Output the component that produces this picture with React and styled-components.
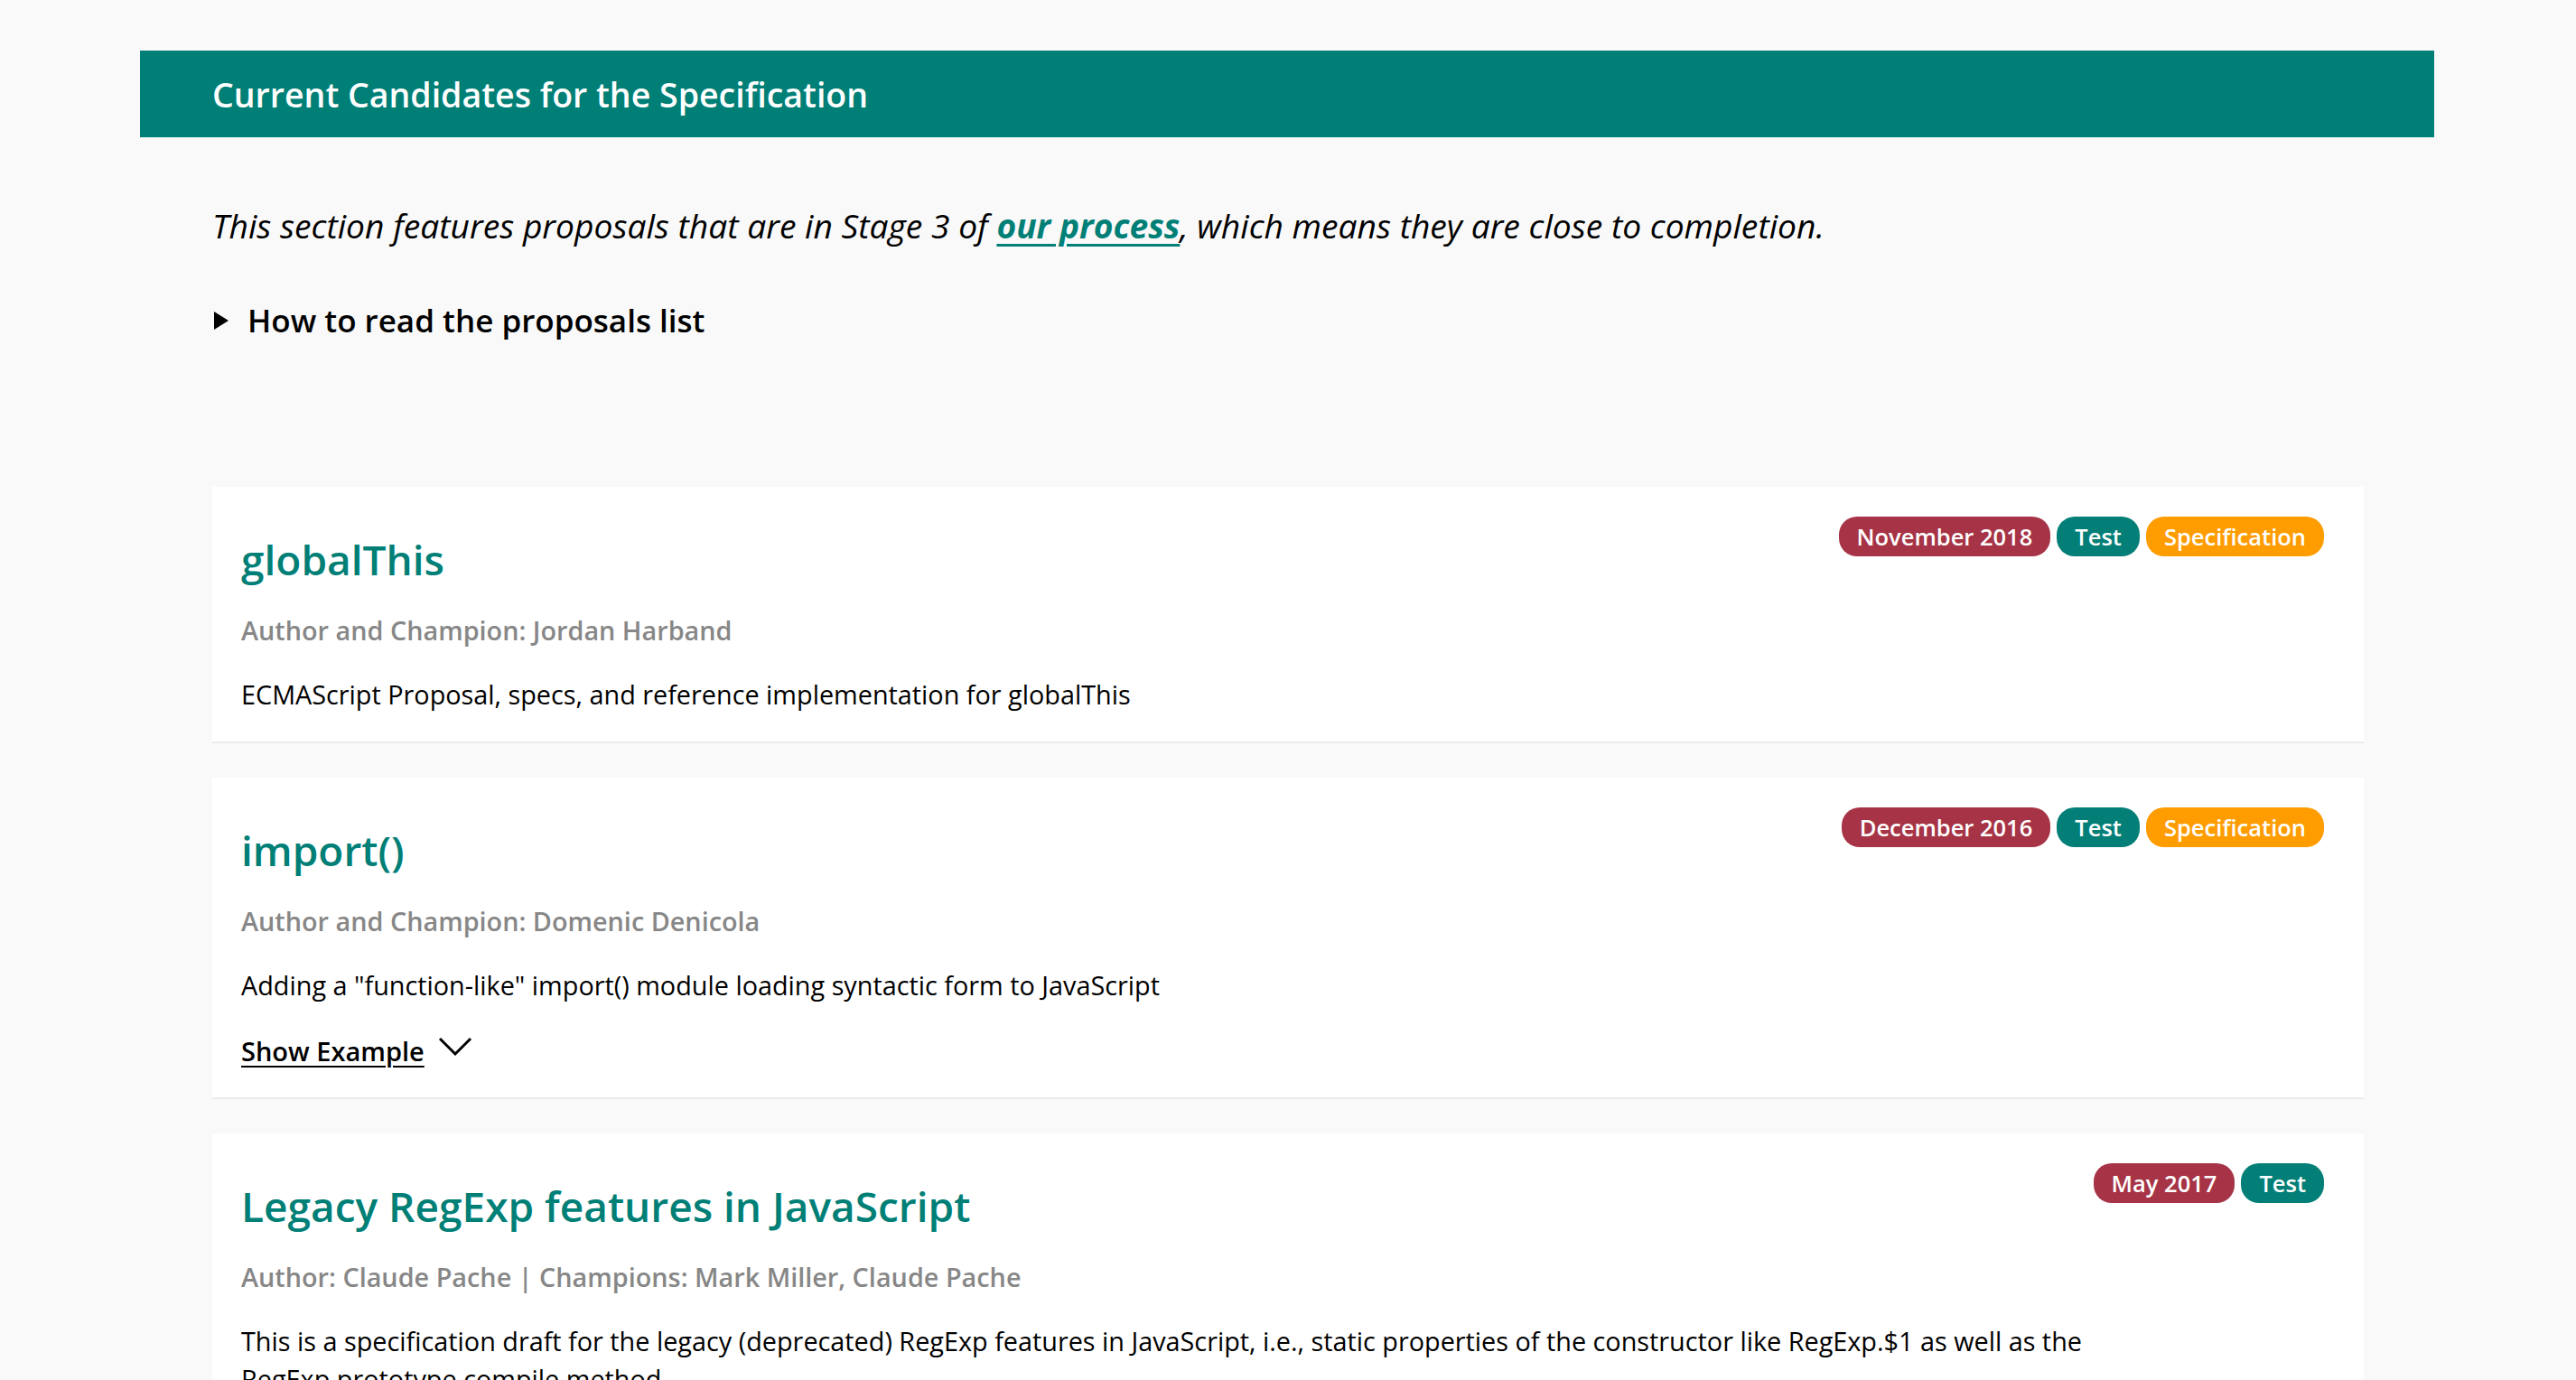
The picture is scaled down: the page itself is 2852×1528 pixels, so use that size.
import React from "react";
import styled, { createGlobalStyle } from "styled-components";

const GlobalStyle = createGlobalStyle`
  html, body {
    margin: 0;
    padding: 0;
    background: #f9f9f9;
    font-family: "Open Sans", "Noto Sans", sans-serif;
    color: #000;
  }
`;

const Page = styled.div`
  width: 2540px;
  margin: 0 auto;
  padding-top: 56px;
  transform: translateX(-1px);
`;

const SectionHeader = styled.h2`
  margin: 0;
  height: 96px;
  display: flex;
  align-items: center;
  padding-left: 80px;
  background: #007f77;
  color: #fff;
  font-size: 37.5px;
  font-weight: 600;
`;

const Content = styled.div`
  padding: 0 78px 0 80px;
`;

const Intro = styled.p`
  margin: 72px 0 0;
  font-size: 37.2px;
  font-style: italic;
  line-height: 52px;
`;

const Link = styled.a`
  color: #007f77;
  font-weight: 700;
  text-decoration: underline;
  text-underline-offset: 6px;
  text-decoration-thickness: 3px;
`;

const Details = styled.div`
  margin-top: 54px;
  display: flex;
  align-items: center;
  gap: 21px;
  font-size: 35px;
  font-weight: 600;
  line-height: 50px;
`;

const Triangle = styled.span`
  width: 0;
  height: 0;
  border-top: 10px solid transparent;
  border-bottom: 10px solid transparent;
  border-left: 16px solid #000;
  margin-left: 2px;
`;

const List = styled.div`
  margin-top: 159px;
  display: flex;
  flex-direction: column;
  gap: 38px;
`;

const Card = styled.article`
  background: #fff;
  border-bottom: 2px solid #ebebeb;
  padding: 33px 44px 31px 32px;
`;

const TopRow = styled.div`
  display: flex;
  justify-content: space-between;
  align-items: flex-start;
`;

const Title = styled.h3`
  margin: 17px 0 0;
  font-size: 46px;
  font-weight: 600;
  line-height: 60px;
  color: #007f77;
`;

const Badges = styled.div`
  display: flex;
  gap: 7px;
`;

const Badge = styled.span`
  display: inline-flex;
  align-items: center;
  height: 44px;
  padding: 0 20px;
  border-radius: 20px;
  color: #fff;
  font-size: 25.5px;
  font-weight: 600;
  background: ${(p) =>
    p.$kind === "date" ? "#a63446" : p.$kind === "spec" ? "#fe9c00" : "#037f77"};
`;

const Author = styled.div`
  margin-top: 28px;
  font-size: 28.8px;
  font-weight: 600;
  line-height: 41px;
  color: #878787;
`;

const Description = styled.p`
  margin: 30px 0 0;
  font-size: 28.8px;
  line-height: 42px;
  max-width: 2260px;
`;

const ShowExample = styled.div`
  margin-top: 31px;
  display: flex;
  align-items: center;
  gap: 15px;
  font-size: 29px;
  font-weight: 600;
  line-height: 41px;
`;

const ShowLink = styled.span`
  text-decoration: underline;
  text-underline-offset: 5px;
  text-decoration-thickness: 2px;
`;

const Chevron = () => (
  <svg width="38" height="22" viewBox="0 0 38 22" style={{ marginTop: -10 }}>
    <polyline points="2,2 19,19 36,2" fill="none" stroke="#000" strokeWidth="3" />
  </svg>
);

const proposals = [
  {
    title: "globalThis",
    author: "Author and Champion: Jordan Harband",
    desc: "ECMAScript Proposal, specs, and reference implementation for globalThis",
    date: "November 2018",
    spec: true,
  },
  {
    title: "import()",
    author: "Author and Champion: Domenic Denicola",
    desc: 'Adding a "function-like" import() module loading syntactic form to JavaScript',
    date: "December 2016",
    spec: true,
    example: true,
  },
  {
    title: "Legacy RegExp features in JavaScript",
    author: "Author: Claude Pache | Champions: Mark Miller, Claude Pache",
    desc: "This is a specification draft for the legacy (deprecated) RegExp features in JavaScript, i.e., static properties of the constructor like RegExp.$1 as well as the RegExp.prototype.compile method.",
    date: "May 2017",
    spec: false,
  },
];

export default function App() {
  return (
    <>
      <GlobalStyle />
      <Page>
        <SectionHeader>Current Candidates for the Specification</SectionHeader>
        <Content>
          <Intro>
            This section features proposals that are in Stage 3 of{" "}
            <Link href="#">our process</Link>, which means they are close to completion.
          </Intro>
          <Details>
            <Triangle />
            How to read the proposals list
          </Details>
          <List>
            {proposals.map((p) => (
              <Card key={p.title}>
                <TopRow>
                  <Title>{p.title}</Title>
                  <Badges>
                    <Badge $kind="date">{p.date}</Badge>
                    <Badge $kind="test">Test</Badge>
                    {p.spec && <Badge $kind="spec">Specification</Badge>}
                  </Badges>
                </TopRow>
                <Author>{p.author}</Author>
                <Description>{p.desc}</Description>
                {p.example && (
                  <ShowExample>
                    <ShowLink>Show Example</ShowLink>
                    <Chevron />
                  </ShowExample>
                )}
              </Card>
            ))}
          </List>
        </Content>
      </Page>
    </>
  );
}
